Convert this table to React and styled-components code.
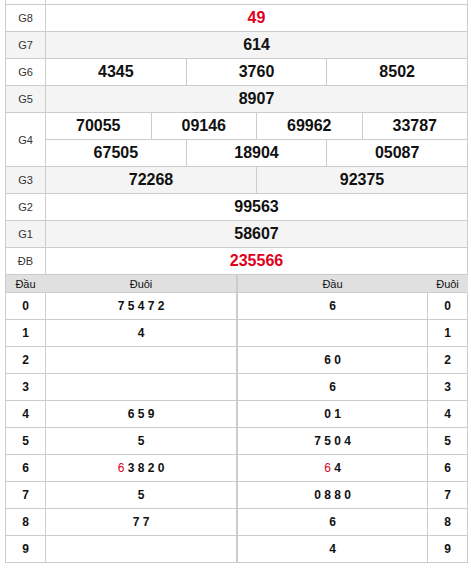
import React from 'react';
import styled, { createGlobalStyle } from 'styled-components';

const prizes = [
  { label: 'G8', rows: [['49']], red: true },
  { label: 'G7', rows: [['614']] },
  { label: 'G6', rows: [['4345', '3760', '8502']] },
  { label: 'G5', rows: [['8907']] },
  { label: 'G4', rows: [['70055', '09146', '69962', '33787'], ['67505', '18904', '05087']] },
  { label: 'G3', rows: [['72268', '92375']] },
  { label: 'G2', rows: [['99563']] },
  { label: 'G1', rows: [['58607']] },
  { label: 'ĐB', rows: [['235566']], red: true },
];

const loto = [
  { head: '7 5 4 7 2', tail: '6' },
  { head: '4', tail: '' },
  { head: '', tail: '6 0' },
  { head: '', tail: '6' },
  { head: '6 5 9', tail: '0 1' },
  { head: '5', tail: '7 5 0 4' },
  { head: ['6', ' 3 8 2 0'], tail: ['6', ' 4'] },
  { head: '5', tail: '0 8 8 0' },
  { head: '7 7', tail: '6' },
  { head: '', tail: '4' },
];

const GlobalStyle = createGlobalStyle`
  body {
    margin: 0;
    background: #fff;
    font-family: "Liberation Sans", Arial, sans-serif;
  }
  * {
    box-sizing: border-box;
  }
`;

const Page = styled.div`
  padding-left: 5px;
  width: 468px;
`;

const Board = styled.div`
  width: 463px;
  border-left: 1px solid #ccc;
`;

const PrizeRow = styled.div`
  display: grid;
  grid-template-columns: 40px 1fr;
  background: ${(p) => (p.$alt ? '#f4f4f4' : '#fff')};
`;

const Stub = styled.div`
  display: grid;
  grid-template-columns: 40px 1fr;
  height: 5px;
  div {
    border-right: 1px solid #ccc;
    border-bottom: 1px solid #ccc;
  }
`;

const Label = styled.div`
  display: flex;
  align-items: center;
  justify-content: center;
  border-right: 1px solid #ccc;
  border-bottom: 1px solid #ccc;
  font-size: 11px;
  color: #333;
`;

const Values = styled.div`
  display: flex;
  flex-direction: column;
`;

const ValueLine = styled.div`
  display: grid;
  grid-template-columns: repeat(${(p) => p.$cols}, 1fr);
`;

const Number = styled.div`
  height: 27px;
  display: flex;
  align-items: center;
  justify-content: center;
  border-right: 1px solid #ccc;
  border-bottom: 1px solid #ccc;
  font-size: 16px;
  font-weight: bold;
  color: ${(p) => (p.$red ? '#e0001b' : '#111')};
`;

const LotoRow = styled.div`
  display: grid;
  grid-template-columns: 40px 192px 190px 40px;
  background: ${(p) => (p.$header ? '#e0e0e0' : '#fff')};
`;

const LotoCell = styled.div`
  height: ${(p) => (p.$header ? '18px' : '27px')};
  display: flex;
  align-items: center;
  justify-content: center;
  border-bottom: 1px solid #ccc;
  border-right: ${(p) => (p.$mid ? '2px' : '1px')} solid
    ${(p) => (p.$header && !p.$mid ? '#e0e0e0' : '#ccc')};
  font-size: ${(p) => (p.$header ? '11px' : '12px')};
  font-weight: ${(p) => (p.$header ? 'normal' : 'bold')};
  color: #111;
  white-space: pre;
`;

const Red = styled.span`
  color: #e0001b;
  font-weight: normal;
`;

const renderDigits = (v) =>
  Array.isArray(v) ? (
    <>
      <Red>{v[0]}</Red>
      {v[1]}
    </>
  ) : (
    v
  );

const App = () => {
  return (
    <Page>
      <GlobalStyle />
      <Board>
        <Stub>
          <div />
          <div />
        </Stub>
        {prizes.map((p, i) => (
          <PrizeRow key={p.label} $alt={i % 2 === 1}>
            <Label>{p.label}</Label>
            <Values>
              {p.rows.map((line, j) => (
                <ValueLine key={j} $cols={line.length}>
                  {line.map((n) => (
                    <Number key={n} $red={p.red}>
                      {n}
                    </Number>
                  ))}
                </ValueLine>
              ))}
            </Values>
          </PrizeRow>
        ))}
        <LotoRow $header>
          <LotoCell $header>Đầu</LotoCell>
          <LotoCell $header $mid>
            Đuôi
          </LotoCell>
          <LotoCell $header>Đầu</LotoCell>
          <LotoCell $header>Đuôi</LotoCell>
        </LotoRow>
        {loto.map((r, i) => (
          <LotoRow key={i}>
            <LotoCell>{i}</LotoCell>
            <LotoCell $mid>{renderDigits(r.head)}</LotoCell>
            <LotoCell>{renderDigits(r.tail)}</LotoCell>
            <LotoCell>{i}</LotoCell>
          </LotoRow>
        ))}
      </Board>
    </Page>
  );
};

export default App;
